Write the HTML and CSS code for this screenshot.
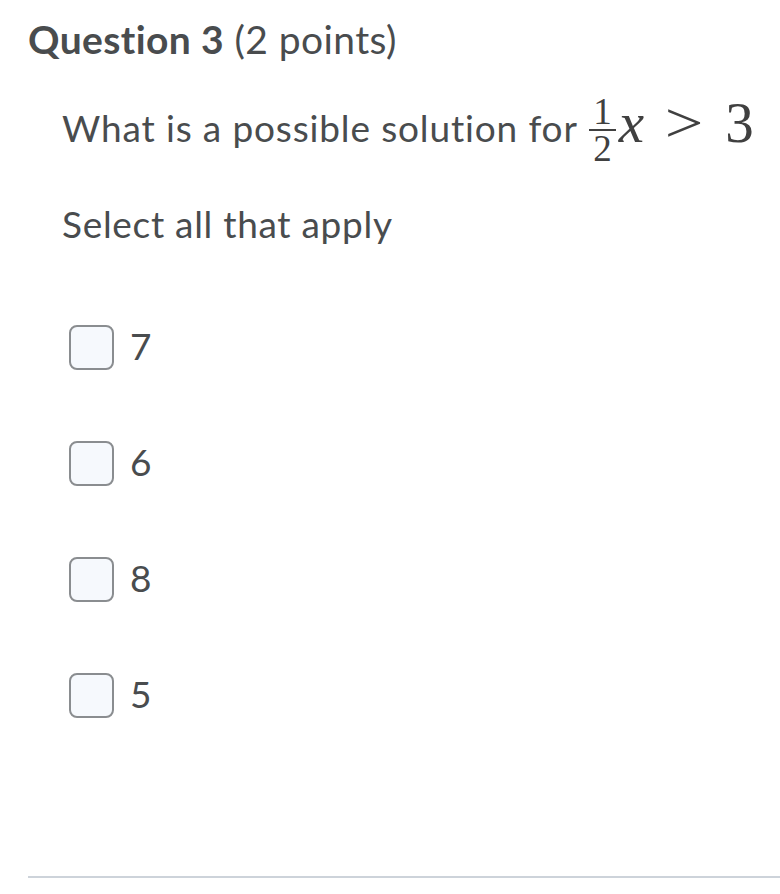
FILE: index.html
```html
<!DOCTYPE html>
<html>
<head>
<meta charset="utf-8">
<link rel="stylesheet" href="styles.css">
</head>
<body>
<div class="page">
  <h1 class="title"><strong>Question 3</strong> <span class="pts">(2 points)</span></h1>
  <div class="body">
    <p class="q">What is a possible solution for <span class="math"><span class="frac"><span class="num">1</span><span class="den">2</span></span><i class="var">x</i><span class="op">&gt;</span><span class="n3">3</span></span></p>
    <p class="sel">Select all that apply</p>
    <ul class="opts">
      <li class="opt"><span class="box"></span><span class="lbl">7</span></li>
      <li class="opt"><span class="box"></span><span class="lbl">6</span></li>
      <li class="opt"><span class="box"></span><span class="lbl">8</span></li>
      <li class="opt"><span class="box"></span><span class="lbl">5</span></li>
    </ul>
  </div>
  <div class="rule"></div>
</div>
</body>
</html>
```
FILE: styles.css
```css
html, body { margin: 0; padding: 0; background: #fff; }
body { font-family: Lato, "Liberation Sans", sans-serif; color: #494c4e; }
.page { padding: 15px 0 0 28px; }
.title { margin: 0; font-size: 39px; line-height: 48px; font-weight: 400; letter-spacing: 0.4px; }
.title strong { font-weight: 700; }
.body { padding-left: 34px; }
.q { margin: 31px 0 0; font-size: 37px; line-height: 44px; letter-spacing: 0.85px; white-space: nowrap; }
.math { font-family: "Liberation Serif", "DejaVu Serif", serif; font-size: 57px; line-height: 0; color: #404040; letter-spacing: 0; }
.frac { display: inline-block; vertical-align: -19px; font-size: 37px; margin: 0 3px 0 2px; text-align: center; }
.num { display: block; line-height: 35px; border-bottom: 2px solid #404040; padding: 0 4px; }
.den { display: block; line-height: 35px; }
.var { font-style: italic; }
.op { display: inline-block; transform: scaleX(1.2); margin: 0 25px 0 24px; }
.sel { margin: 36px 0 0; font-size: 37px; line-height: 44px; letter-spacing: 0.7px; }
.opts { list-style: none; margin: 79px 0 0; padding: 0; display: flex; flex-direction: column; gap: 71px; }
.opt { display: flex; align-items: center; gap: 16px; height: 45px; }
.box { width: 41px; height: 41px; margin-left: 7px; border: 2px solid #8a8d90; border-radius: 8px; background: #f6f9fd; flex: none; }
.lbl { font-size: 37px; line-height: 44px; position: relative; top: -2px; }
.rule { margin-top: 158px; height: 2px; background: #cdd3da; }
```
